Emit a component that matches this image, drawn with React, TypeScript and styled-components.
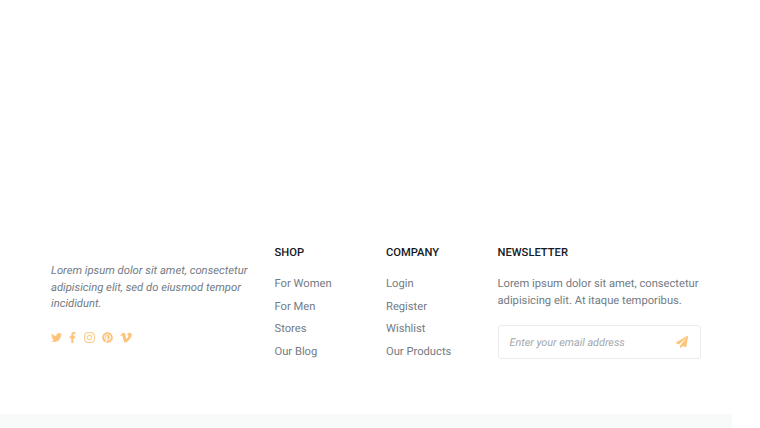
import React from "react";
import styled, { createGlobalStyle } from "styled-components";
import { FaTwitter, FaFacebookF, FaPinterest, FaVimeoV, FaPaperPlane } from "react-icons/fa";

const Global = createGlobalStyle`
  html, body { margin: 0; padding: 0; background: #fff; overflow: hidden; }
  body { font-family: Roboto, "Liberation Sans", sans-serif; text-rendering: geometricPrecision; }
`;

const Page = styled.div`
  width: 732px;
  height: 428px;
  display: flex;
  flex-direction: column;
`;

const Footer = styled.footer`
  flex: 1;
  display: grid;
  grid-template-columns: 223.5px 111.5px 111.5px 203px;
  padding: 245px 0 0 51px;
`;

const About = styled.div`
  padding-top: 18px;
`;

const Tagline = styled.p`
  margin: 0;
  width: 205px;
  font-size: 11.25px;
  line-height: 16.5px;
  font-style: italic;
  color: #737b83;
`;

const Socials = styled.div`
  display: flex;
  align-items: center;
  margin-top: 18px;
  color: #fcc47a;
`;

const Social = styled.span<{ $w: number; $size?: number }>`
  display: flex;
  width: ${(p) => p.$w}px;
  font-size: ${(p) => p.$size ?? 11}px;
`;

const Title = styled.h4`
  margin: 1px 0 16px;
  font-size: 11.2px;
  line-height: 14px;
  font-weight: 500;
  color: #16191e;
`;

const Links = styled.ul`
  margin: 0;
  padding: 0;
  list-style: none;
  display: flex;
  flex-direction: column;
  gap: 7.5px;
`;

const LinkItem = styled.li`
  font-size: 11.2px;
  line-height: 15px;
  color: #737b83;
`;

const Text = styled.p`
  margin: 0;
  width: 203px;
  font-size: 11.2px;
  line-height: 16.5px;
  color: #737b83;
`;

const Form = styled.div`
  box-sizing: border-box;
  margin-top: 15.5px;
  height: 34px;
  display: flex;
  align-items: center;
  justify-content: space-between;
  padding: 1px 12px 0 11px;
  border: 1px solid #e9ecef;
  border-radius: 3px;
`;

const Placeholder = styled.span`
  font-size: 10.8px;
  font-style: italic;
  color: #a3a8ae;
`;

const Send = styled.span`
  display: flex;
  font-size: 12px;
  color: #fcc47a;
`;

const BottomBar = styled.div`
  height: 14px;
  background: #f8f9f9;
`;

const InstagramIcon = () => (
  <svg width="11" height="11" viewBox="0 0 11 11" fill="none" stroke="currentColor">
    <rect x="0.7" y="0.7" width="9.6" height="9.6" rx="2.4" strokeWidth="1" />
    <circle cx="5.5" cy="5.5" r="2.2" strokeWidth="1" />
    <circle cx="8.2" cy="2.8" r="0.5" fill="currentColor" stroke="none" />
  </svg>
);

const columns = [
  { title: "SHOP", links: ["For Women", "For Men", "Stores", "Our Blog"] },
  { title: "COMPANY", links: ["Login", "Register", "Wishlist", "Our Products"] },
];

export default function App() {
  return (
    <Page>
      <Global />
      <Footer>
        <About>
          <Tagline>Lorem ipsum dolor sit amet, consectetur adipisicing elit, sed do eiusmod tempor incididunt.</Tagline>
          <Socials>
            <Social $w={16}><FaTwitter /></Social>
            <Social $w={16.5}><FaFacebookF /></Social>
            <Social $w={18.5}><InstagramIcon /></Social>
            <Social $w={18}><FaPinterest /></Social>
            <Social $w={12} $size={13}><FaVimeoV /></Social>
          </Socials>
        </About>
        {columns.map((c) => (
          <div key={c.title}>
            <Title>{c.title}</Title>
            <Links>
              {c.links.map((l) => (
                <LinkItem key={l}>{l}</LinkItem>
              ))}
            </Links>
          </div>
        ))}
        <div>
          <Title>NEWSLETTER</Title>
          <Text>Lorem ipsum dolor sit amet, consectetur adipisicing elit. At itaque temporibus.</Text>
          <Form>
            <Placeholder>Enter your email address</Placeholder>
            <Send><FaPaperPlane /></Send>
          </Form>
        </div>
      </Footer>
      <BottomBar />
    </Page>
  );
}
